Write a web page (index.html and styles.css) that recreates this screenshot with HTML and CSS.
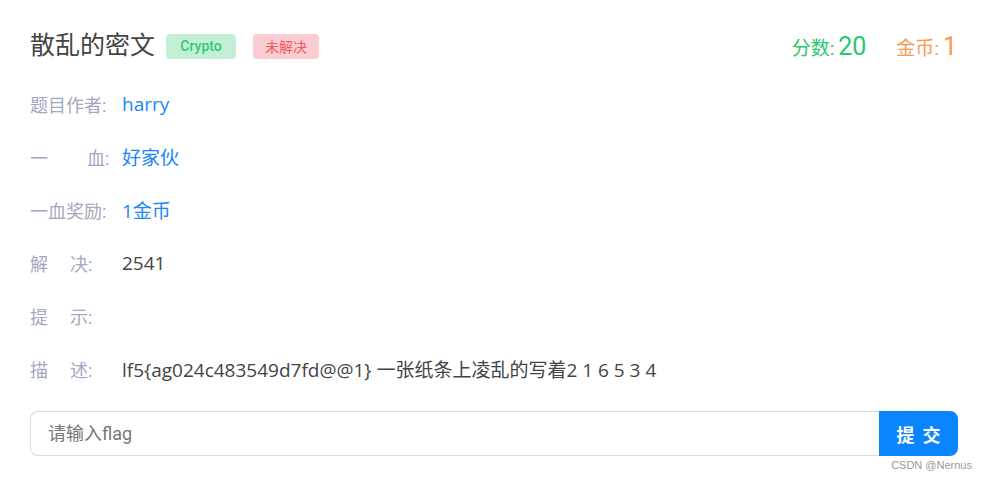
FILE: index.html
```html
<!DOCTYPE html>
<html lang="zh">
<head>
<meta charset="utf-8">
<link rel="stylesheet" href="styles.css">
</head>
<body>
<div class="card">
  <div class="header">
    <div class="title-group">
      <h1 class="title">散乱的密文</h1>
      <span class="tag tag-green">Crypto</span>
      <span class="tag tag-red">未解决</span>
    </div>
    <div class="stats">
      <span class="stat stat-score"><span class="stat-label">分数:</span> <span class="stat-num">20</span></span>
      <span class="stat stat-coin"><span class="stat-label">金币:</span> <span class="stat-num">1</span></span>
    </div>
  </div>
  <div class="row"><span class="label">题目作者:</span><span class="value blue">harry</span></div>
  <div class="row"><span class="label">一<span class="sp-wide"></span>血:</span><span class="value blue">好家伙</span></div>
  <div class="row"><span class="label">一血奖励:</span><span class="value blue">1金币</span></div>
  <div class="row"><span class="label">解<span class="sp-narrow"></span>决:</span><span class="value">2541</span></div>
  <div class="row"><span class="label">提<span class="sp-narrow"></span>示:</span><span class="value"></span></div>
  <div class="row"><span class="label">描<span class="sp-narrow"></span>述:</span><span class="value">lf5{ag024c483549d7fd@@1} 一张纸条上凌乱的写着2 1 6 5 3 4</span></div>
  <div class="submit">
    <input class="flag-input" type="text" placeholder="请输入flag">
    <button class="submit-btn">提 交</button>
  </div>
  <div class="watermark">CSDN @Nernus</div>
</div>
</body>
</html>
```
FILE: styles.css
```css
* { box-sizing: border-box; }
html, body { margin: 0; padding: 0; background: #fff; }
body {
  font-family: Roboto, "Noto Sans CJK SC", sans-serif;
  color: #444;
  width: 986px;
  height: 480px;
  overflow: hidden;
}
.card {
  padding: 24px 28px 0 30px;
}
.header {
  height: 44px;
  display: flex;
  align-items: center;
  justify-content: space-between;
  margin-bottom: 9px;
}
.title-group {
  display: flex;
  align-items: center;
}
.title {
  margin: 0;
  font-size: 25px;
  font-weight: 400;
  color: #444;
  line-height: 44px;
}
.tag {
  display: inline-flex;
  align-items: center;
  justify-content: center;
  height: 25px;
  border-radius: 4px;
  font-size: 14px;
  margin-left: 11px;
}
.tag-green {
  width: 70px;
  background: #c3efd7;
  color: #2ecc71;
  font-weight: 500;
}
.tag-red {
  width: 66px;
  margin-left: 17px;
  background: #fbcdd1;
  color: #ee5a63;
}
.stats {
  display: flex;
  align-items: baseline;
  gap: 30px;
  padding-right: 1px;
}
.stat-label { font-size: 19px; }
.stat-num { font-size: 25px; }
.stat-score { color: #2bc76f; margin-left: -4px; }
.stat-coin { color: #fa9a50; }
.row {
  height: 53px;
  display: flex;
  align-items: center;
  font-size: 18px;
}
.label {
  width: 92px;
  flex: none;
  color: #a4a7c0;
  white-space: nowrap;
}
.sp-wide { display: inline-block; width: 39px; }
.sp-narrow { display: inline-block; width: 22px; }
.value {
  color: #444;
  white-space: nowrap;
  font-family: "Open Sans", "Noto Sans CJK SC", sans-serif;
  font-size: 19px;
}
.value.blue { color: #1a86fb; }
.submit {
  display: flex;
  height: 45px;
  margin-top: 16px;
}
.flag-input {
  flex: 1;
  height: 45px;
  border: 1px solid #dcdcdc;
  border-right: none;
  border-radius: 8px 0 0 8px;
  padding: 0 17px;
  font-size: 18px;
  font-family: Roboto, "Noto Sans CJK SC", sans-serif;
  color: #444;
  outline: none;
}
.flag-input::placeholder { color: #777; }
.submit-btn {
  width: 79px;
  height: 45px;
  border: none;
  border-radius: 0 8px 8px 0;
  background: #0a84ff;
  color: #fff;
  font-size: 18px;
  font-weight: 700;
  font-family: "Noto Sans CJK SC", sans-serif;
  letter-spacing: 2px;
  padding: 0 0 0 2px;
}
.watermark {
  text-align: right;
  font-size: 11px;
  color: #999;
  font-family: "Liberation Sans", sans-serif;
  margin-top: 3px;
  margin-right: -14px;
}
```
